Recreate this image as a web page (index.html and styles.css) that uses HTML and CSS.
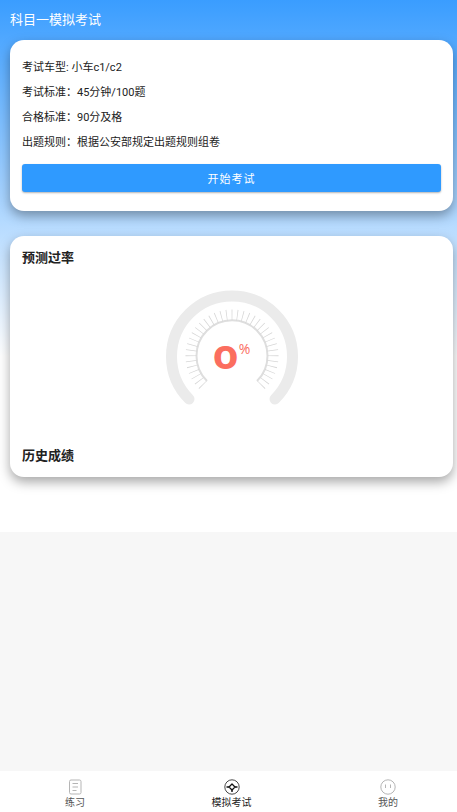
FILE: index.html
```
<!DOCTYPE html>
<html lang="zh-CN">
<head>
    <meta charset="UTF-8">
    <meta name="viewport" content="width=device-width, initial-scale=1.0">
    <title>科目一模拟考试</title>
    <link rel="stylesheet" href="styles.css">
</head>
<body>

<main class="page">
    <h1 class="page-title">科目一模拟考试</h1>

    <!-- Exam info -->
    <section class="card exam-card">
        <p>考试车型: 小车c1/c2</p>
        <p>考试标准：45分钟/100题</p>
        <p>合格标准：90分及格</p>
        <p>出题规则：根据公安部规定出题规则组卷</p>
        <button class="btn" type="button">开始考试</button>
    </section>

    <!-- Pass rate and history -->
    <section class="card">
        <h2>预测过率</h2>
        <div class="gauge">
            <svg width="132" height="132" viewBox="0 0 132 132" fill="none">
                <path d="M23 109A60.5 60.5 0 1 1 109 109" stroke="#ebebeb" stroke-width="11" stroke-linecap="round"/>
                <path d="M41 91A35.5 35.5 0 1 1 91 91" stroke="#dedede" stroke-width="2"/>
                <path d="M37 95A41 41 0 1 1 95 95" stroke="#d6d6d6" stroke-width="11" pathLength="271" stroke-dasharray="1 6.5"/>
            </svg>
            <div class="rate"><span class="rate-num">o</span><span class="rate-unit">%</span></div>
        </div>
        <h2>历史成绩</h2>
    </section>
</main>

<nav class="tabbar">
    <a href="#practice">
        <svg width="16" height="16" viewBox="0 0 16 16" fill="none" stroke="#b5b5b5">
            <rect x="2.5" y="1" width="11.5" height="14" rx="1.5"/>
            <path d="M5.5 4.5h5.5M5.5 8h5.5M5.5 11.5h4"/>
        </svg>
        <span>练习</span>
    </a>
    <a href="#exam" class="active">
        <svg width="16" height="16" viewBox="0 0 16 16" fill="none" stroke="#333">
            <circle cx="8" cy="8" r="7.2" stroke-width="0.9"/>
            <path d="M8 5L11 8L8 11L5 8Z" stroke="#111" stroke-width="1.3" stroke-linejoin="round"/>
            <path d="M2.5 8h2.5M11 8h2.5M8 11v2" stroke="#111" stroke-width="1.4"/>
        </svg>
        <span>模拟考试</span>
    </a>
    <a href="#mine">
        <svg width="16" height="16" viewBox="0 0 16 16" fill="none" stroke="#b5b5b5">
            <circle cx="8" cy="8" r="7.2"/>
            <path d="M5.5 5.5v3.5M10.5 5.5v3.5"/>
        </svg>
        <span>我的</span>
    </a>
</nav>

</body>
</html>
```
FILE: styles.css
```
* {
    box-sizing: border-box;
}
body {
    display: flex;
    flex-direction: column;
    min-height: 100vh;
    margin: 0;
    font-family: Roboto, "Noto Sans CJK SC", sans-serif;
    font-size: 11px;
    color: #222;
    background-color: #f7f7f7;
}
h1, h2, p {
    margin: 0;
}
.page {
    padding: 0 4px 55px 10px;
    background: linear-gradient(#3a9dff, #fff 67%);
}
.page-title {
    font-size: 13px;
    font-weight: normal;
    line-height: 40px;
    color: white;
}
.card {
    padding: 13px 12px 12px;
    background-color: white;
    border-radius: 14px;
    box-shadow: 0 5px 12px rgba(0, 0, 0, 0.35);
}
.exam-card {
    padding: 15px 12px 19px;
    margin-bottom: 25px;
}
.exam-card p {
    line-height: 25px;
}
.btn {
    display: block;
    width: 100%;
    height: 28px;
    margin-top: 9px;
    border: none;
    border-radius: 3px;
    font: inherit;
    letter-spacing: 1px;
    color: white;
    background-color: #2f9aff;
    box-shadow: 0 1px 2px rgba(0, 0, 0, 0.3);
    cursor: pointer;
}
.card h2 {
    font-size: 13px;
    line-height: 18px;
}
.gauge {
    display: grid;
    place-items: center;
    padding: 23px 0 25px;
}
.gauge svg, .rate {
    grid-area: 1 / 1;
}
.rate {
    display: flex;
    padding-bottom: 6px;
    color: #fb6e5f;
}
.rate-num {
    font-family: "Noto Sans", sans-serif;
    font-size: 42px;
    font-weight: bold;
    line-height: 48px;
}
.rate-unit {
    font-family: "Open Sans", sans-serif;
    font-size: 14px;
    line-height: 40px;
}
.tabbar {
    display: flex;
    justify-content: space-between;
    margin-top: auto;
    padding: 8px 59px 1px 65px;
    background-color: white;
}
.tabbar a {
    display: flex;
    flex-direction: column;
    align-items: center;
    font-size: 10px;
    line-height: 16px;
    color: #555;
    text-decoration: none;
}
.tabbar .active {
    color: #222;
}
```
